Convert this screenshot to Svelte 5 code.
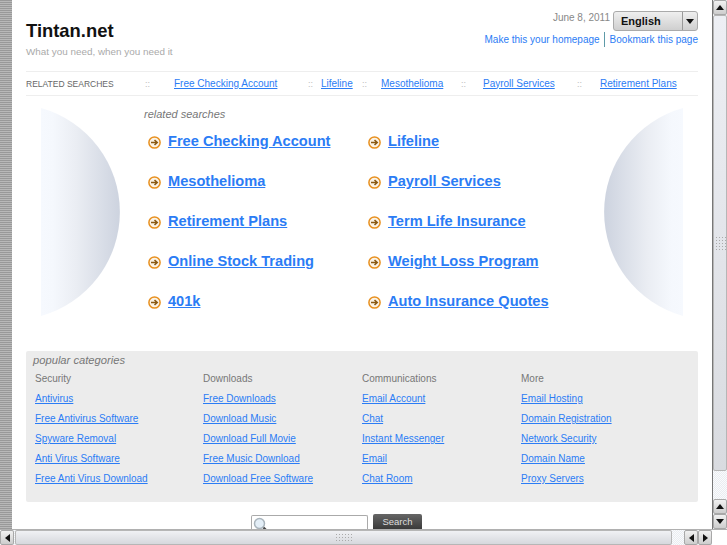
<script>
  const top = ['Free Checking Account', 'Lifeline', 'Mesothelioma', 'Payroll Services', 'Retirement Plans'];
  const main = [
    ['Free Checking Account', 'Lifeline'],
    ['Mesothelioma', 'Payroll Services'],
    ['Retirement Plans', 'Term Life Insurance'],
    ['Online Stock Trading', 'Weight Loss Program'],
    ['401k', 'Auto Insurance Quotes']
  ];
  const cats = [
    ['Security', ['Antivirus', 'Free Antivirus Software', 'Spyware Removal', 'Anti Virus Software', 'Free Anti Virus Download']],
    ['Downloads', ['Free Downloads', 'Download Music', 'Download Full Movie', 'Free Music Download', 'Download Free Software']],
    ['Communications', ['Email Account', 'Chat', 'Instant Messenger', 'Email', 'Chat Room']],
    ['More', ['Email Hosting', 'Domain Registration', 'Network Security', 'Domain Name', 'Proxy Servers']]
  ];
</script>

<div class="frame">
  <div class="strip"></div>
  <main class="page">
    <header class="head">
      <div class="brand">
        <h1>Tintan.net</h1>
        <p>What you need, when you need it</p>
      </div>
      <div class="tools">
        <div class="daterow">
          <span class="date">June 8, 2011</span>
          <div class="select"><span class="lang">English</span><span class="drop"><i class="tri-d"></i></span></div>
        </div>
        <div class="hlinks"><a href="#a">Make this your homepage</a><span class="sep"></span><a href="#b">Bookmark this page</a></div>
      </div>
    </header>

    <nav class="related">
      <span class="rl">RELATED SEARCHES</span>
      {#each top as t}
        <span class="dots">::</span>
        <a href="#t">{t}</a>
      {/each}
    </nav>

    <section class="hero">
      <svg class="moon" width="80" height="208" viewBox="0 0 80 208" aria-hidden="true">
        <defs>
          <linearGradient id="gl" x1="0" x2="1" y1="0" y2="0">
            <stop offset="0" stop-color="#f6f9fe" />
            <stop offset="0.15" stop-color="#f5f8fd" />
            <stop offset="0.45" stop-color="#eaedf3" />
            <stop offset="1" stop-color="#cdd3df" />
          </linearGradient>
        </defs>
        <path d="M0 0A108 108 0 0 1 0 208Z" fill="url(#gl)" />
      </svg>
      <div class="center">
        <div class="rs">related searches</div>
        <div class="grid">
          {#each main as row}
            {#each row as item}
              <div class="item">
                <svg width="13" height="13" viewBox="0 0 13 13" aria-hidden="true">
                  <circle cx="6.5" cy="6.5" r="5.6" fill="#fbf3e6" stroke="#e8901f" stroke-width="1.5" />
                  <path d="M3 6.5H8.5M6.5 4 9.2 6.5 6.5 9" fill="none" stroke="#8a5a14" stroke-width="1.6" />
                </svg>
                <a href="#m">{item}</a>
              </div>
            {/each}
          {/each}
        </div>
      </div>
      <svg class="moon" width="80" height="208" viewBox="0 0 80 208" aria-hidden="true">
        <defs>
          <linearGradient id="gr" x1="1" x2="0" y1="0" y2="0">
            <stop offset="0" stop-color="#f6f9fe" />
            <stop offset="0.15" stop-color="#f5f8fd" />
            <stop offset="0.45" stop-color="#eaedf3" />
            <stop offset="1" stop-color="#cdd3df" />
          </linearGradient>
        </defs>
        <path d="M80 0A108 108 0 0 0 80 208Z" fill="url(#gr)" />
      </svg>
    </section>

    <section class="popular">
      <div class="pt">popular categories</div>
      <div class="cols">
        {#each cats as [name, links]}
          <div class="col">
            <div class="ch">{name}</div>
            {#each links as l}
              <a href="#c">{l}</a>
            {/each}
          </div>
        {/each}
      </div>
    </section>

    <form class="search" onsubmit={(e) => e.preventDefault()}>
      <div class="box">
        <svg width="16" height="16" viewBox="0 0 16 16" aria-hidden="true">
          <circle cx="6.5" cy="6.5" r="5" fill="#e3eef7" stroke="#a9b4bc" stroke-width="1.5" />
          <path d="M10.5 10.5 15 15" stroke="#444" stroke-width="2.2" />
        </svg>
      </div>
      <button type="submit">Search</button>
    </form>
  </main>

  <aside class="vbar">
    <div class="vbtn"><i class="tri-u"></i></div>
    <div class="vtrack">
      <div class="vthumb"><span class="grip"></span></div>
    </div>
    <div class="vbtn"><i class="tri-u"></i></div>
    <div class="vbtn"><i class="tri-d"></i></div>
  </aside>

  <div class="hbar">
    <div class="hbtn"><i class="tri-l"></i></div>
    <div class="hthumb"><span class="grip wide"></span></div>
    <div class="hgap"></div>
    <div class="hbtn"><i class="tri-l"></i></div>
    <div class="hbtn"><i class="tri-r"></i></div>
    <div class="corner"></div>
  </div>
</div>

<style>
  :global(body) { margin: 0; background: #fff; }
  .frame {
    width: 727px; height: 545px; overflow: hidden;
    display: grid;
    grid-template-columns: 12px 1fr 15px;
    grid-template-rows: 529px 16px;
    font-family: "Liberation Sans", Arial, sans-serif;
    color: #666;
  }
  a { color: #2b7cf5; text-decoration: underline; }
  .strip {
    background: repeating-linear-gradient(180deg, #999 0 1px, #b8b8b8 1px 2px);
  }
  .page { padding: 0 14px; overflow: hidden; min-width: 0; }

  .head { display: flex; justify-content: space-between; height: 72px; box-sizing: border-box; padding-top: 10px; border-bottom: 1px solid #eeeeee; }
  h1 { margin: 10px 0 0; font-size: 18.4px; line-height: 22px; color: #111; font-weight: bold; }
  .brand p { margin: 4px 0 0; font-size: 9.9px; line-height: 12px; color: #aaa; }
  .tools { display: flex; flex-direction: column; align-items: flex-end; }
  .daterow { display: flex; align-items: flex-start; gap: 3px; height: 21px; }
  .date { font-size: 10px; color: #888; line-height: 15px; }
  .select { display: flex; width: 85px; height: 20px; margin-top: 1px; box-sizing: border-box; border: 1px solid #aaa; border-radius: 3px; background: linear-gradient(#efefef, #cfcfcf); }
  .lang { flex: 1; font-size: 11px; font-weight: bold; color: #111; padding-left: 7px; line-height: 18px; }
  .drop { width: 14px; border-left: 1px solid #999; display: flex; align-items: center; justify-content: center; }
  .hlinks { display: flex; align-items: center; font-size: 10px; height: 16px; }
  .hlinks a { text-decoration: none; }
  .sep { width: 1px; height: 15px; background: #5e9aa8; margin: 0 5px 0 4px; }

  .related {
    display: grid; align-items: center; height: 24px; box-sizing: border-box;
    grid-template-columns: 119px 29px 134px 13px 41px 19px 80px 22px 94px 23px auto;
    border-bottom: 1px solid #eeeeee; font-size: 10px; line-height: 12px;
  }
  .rl { font-size: 8.5px; color: #666; white-space: nowrap; }
  .dots { color: #bbb; font-size: 9px; }
  .related a { white-space: nowrap; }

  .hero { display: flex; justify-content: space-between; height: 255px; padding: 10px 15px 0; box-sizing: border-box; }
  .moon { flex: none; margin-top: 2px; }
  .center { flex: 1; padding-left: 23px; }
  .rs { font-size: 11px; font-style: italic; color: #777; line-height: 16px; }
  .grid { display: grid; grid-template-columns: 220px 1fr; margin-top: 8px; padding-left: 4px; grid-auto-rows: 40px; }
  .item { display: flex; align-items: center; gap: 7px; height: 24px; font-size: 14.6px; font-weight: bold; white-space: nowrap; }
  .item a { margin-top: -2px; }

  .popular { background: #ececec; border-radius: 2px; height: 151px; box-sizing: border-box; padding: 1px 9px 0 7px; }
  .pt { font-size: 11.2px; font-style: italic; color: #777; line-height: 16px; }
  .cols { display: grid; grid-template-columns: 168px 159px 159px 1fr; padding-left: 2px; margin-top: 3px; }
  .col { display: flex; flex-direction: column; align-items: flex-start; font-size: 10px; }
  .ch { height: 20px; line-height: 16px; color: #777; }
  .col a { height: 20px; line-height: 16px; white-space: nowrap; }

  .search { display: flex; gap: 5px; margin: 12px 0 0 225px; }
  .box { width: 117px; height: 14px; margin-top: 1px; box-sizing: border-box; border: 1px solid #aaa; border-bottom: 0; border-radius: 2px 2px 0 0; background: #fff; padding: 1px 0 0 1px; overflow: hidden; }
  .box svg { display: block; }
  button { width: 49px; height: 15px; border: 0; border-radius: 2px 2px 0 0; background: linear-gradient(#666, #3a3a3a); color: #ddd; font: 9.5px/15px "Liberation Sans", Arial, sans-serif; padding: 0; }

  .vbar { display: flex; flex-direction: column; grid-row: 1; grid-column: 3; box-sizing: border-box; border-left: 1px solid #777; background: #eef0f2; }
  .vbtn { height: 15px; flex: none; display: flex; align-items: center; justify-content: center; background: linear-gradient(#f1f1f1, #cdcdcd); border: 1px solid #a8a8a8; border-radius: 2px; box-sizing: border-box; }
  .vtrack { flex: 1; display: flex; flex-direction: column; background: repeating-conic-gradient(#e9ecf1 0 25%, #fafbfc 0 50%) 0 0 / 2px 2px; }
  .vthumb { height: 456px; background: linear-gradient(180deg, #edeff4, #d9dbe0); border: 1px solid #b6b6b6; border-radius: 2px; box-sizing: border-box; display: flex; align-items: center; justify-content: center; }
  .grip { display: block; width: 11px; height: 15px; background: radial-gradient(circle, #aaa 0.6px, transparent 0.8px) 0 0 / 3px 3px; }
  .grip.wide { width: 17px; height: 9px; }

  .hbar { grid-column: 1 / 4; grid-row: 2; display: flex; background: repeating-conic-gradient(#e9ecf1 0 25%, #fafbfc 0 50%) 0 0 / 2px 2px; border-top: 1px solid #b0b0b0; box-sizing: border-box; }
  .hbtn { width: 14px; flex: none; display: flex; align-items: center; justify-content: center; background: linear-gradient(#f1f1f1, #cdcdcd); border: 1px solid #a8a8a8; border-radius: 2px; box-sizing: border-box; }
  .hthumb { width: 657px; flex: none; margin-left: 1px; display: flex; align-items: center; justify-content: center; background: linear-gradient(#f0f1f4, #d6d8dd); border: 1px solid #b6b6b6; border-radius: 2px; box-sizing: border-box; }
  .hgap { flex: 1; }
  .corner { width: 15px; flex: none; background: #fff; }

  i { display: block; width: 0; height: 0; border: 4px solid transparent; }
  .tri-u { border-top: 0; border-bottom: 5px solid #111; }
  .tri-d { border-bottom: 0; border-top: 5px solid #111; }
  .tri-l { border-left: 0; border-right: 5px solid #111; }
  .tri-r { border-right: 0; border-left: 5px solid #111; }
</style>
